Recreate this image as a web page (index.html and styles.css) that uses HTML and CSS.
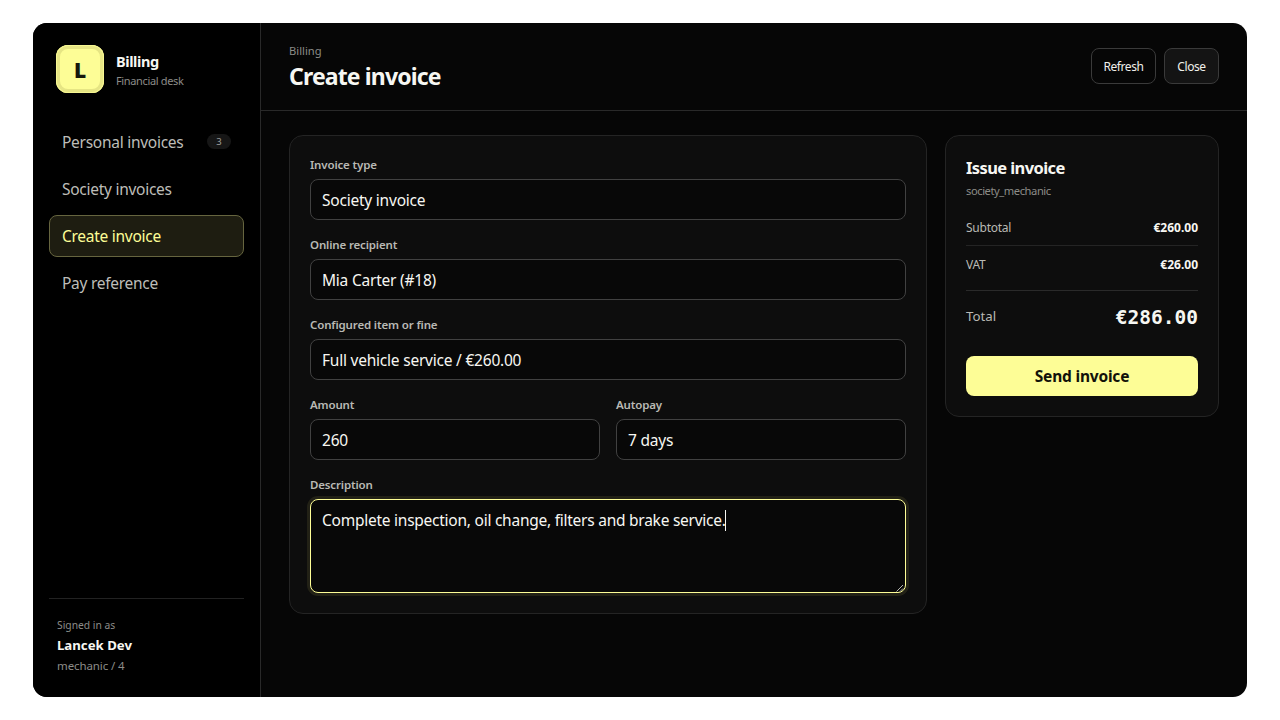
FILE: index.html
```html
<!DOCTYPE html>
<html lang="en">
<head>
    <meta charset="UTF-8">
    <meta name="viewport" content="width=device-width, initial-scale=1.0">
    <title>Billing</title>
    <link rel="stylesheet" href="styles.css">
</head>
<body>
    <div class="shell">
        <aside class="sidebar">
            <div class="brand">
                <div class="brand-mark">L</div>
                <div class="brand-text">
                    <div class="brand-name">Billing</div>
                    <div class="brand-sub">Financial desk</div>
                </div>
            </div>
            <nav class="nav">
                <a class="nav-item"><span>Personal invoices</span><span class="count">3</span></a>
                <a class="nav-item"><span>Society invoices</span></a>
                <a class="nav-item active"><span>Create invoice</span></a>
                <a class="nav-item"><span>Pay reference</span></a>
            </nav>
            <div class="user">
                <div class="user-label">Signed in as</div>
                <div class="user-name">Lancek Dev</div>
                <div class="user-job">mechanic / 4</div>
            </div>
        </aside>
        <main class="main">
            <header class="header">
                <div>
                    <div class="eyebrow">Billing</div>
                    <h1>Create invoice</h1>
                </div>
                <div class="actions">
                    <button class="btn refresh">Refresh</button>
                    <button class="btn close">Close</button>
                </div>
            </header>
            <div class="content">
                <section class="card form">
                    <div class="field">
                        <div class="label">Invoice type</div>
                        <div class="input">Society invoice</div>
                    </div>
                    <div class="field">
                        <div class="label">Online recipient</div>
                        <div class="input">Mia Carter (#18)</div>
                    </div>
                    <div class="field">
                        <div class="label">Configured item or fine</div>
                        <div class="input">Full vehicle service / €260.00</div>
                    </div>
                    <div class="row">
                        <div class="field">
                            <div class="label">Amount</div>
                            <div class="input">260</div>
                        </div>
                        <div class="field">
                            <div class="label">Autopay</div>
                            <div class="input">7 days</div>
                        </div>
                    </div>
                    <div class="field">
                        <div class="label">Description</div>
                        <div class="input textarea focused">
                            <span class="desc">Complete inspection, oil change, filters and brake service.</span><span class="caret"></span>
                            <svg class="grip" width="8" height="8" viewBox="0 0 8 8"><path d="M0.5 7.5L7 1M4 7.5L7 4.5" stroke="#b5b5b0" fill="none"/></svg>
                        </div>
                    </div>
                </section>
                <aside class="card summary">
                    <h2>Issue invoice</h2>
                    <div class="society">society_mechanic</div>
                    <div class="line"><span>Subtotal</span><strong>€260.00</strong></div>
                    <div class="line last"><span>VAT</span><strong>€26.00</strong></div>
                    <div class="total"><span>Total</span><strong>€286.00</strong></div>
                    <button class="send">Send invoice</button>
                </aside>
            </div>
        </main>
    </div>
</body>
</html>
```
FILE: styles.css
```css
* {
    box-sizing: border-box;
}

body {
    margin: 0;
    height: 720px;
    padding: 23px 33px;
    background: #ffffff;
    color: #f7f7f2;
    font-family: "Noto Sans", "Open Sans", sans-serif;
    overflow: hidden;
}

h1, h2 {
    margin: 0;
}

.shell {
    display: flex;
    width: 1214px;
    height: 674px;
    border-radius: 14px;
    overflow: hidden;
    background: #060606;
}

/* Sidebar */
.sidebar {
    width: 228px;
    padding: 22px 16px;
    background: #000000;
    border-right: 1px solid #292929;
    display: flex;
    flex-direction: column;
}

.brand {
    display: flex;
    align-items: center;
    gap: 12px;
    padding-left: 7px;
    margin-bottom: 28px;
}

.brand-mark {
    width: 48px;
    height: 48px;
    border-radius: 12px;
    background: #fdfd96;
    box-shadow: inset 0 0 0 1px #f6f692, inset 0 0 0 4px #e6e584;
    color: #17170c;
    font-size: 21px;
    font-weight: 900;
    line-height: 50px;
    text-align: center;
}

.brand-text {
    padding-top: 3px;
}

.brand-name {
    font-size: 14.5px;
    font-weight: 700;
    line-height: 20px;
    letter-spacing: -0.4px;
}

.brand-sub {
    color: #8c8c88;
    font-size: 11px;
    line-height: 20px;
    letter-spacing: -0.35px;
}

.nav {
    display: flex;
    flex-direction: column;
    gap: 5px;
}

.nav-item {
    height: 42px;
    padding: 0 12px;
    border: 1px solid transparent;
    border-radius: 8px;
    display: flex;
    align-items: center;
    justify-content: space-between;
    color: #bdbdb8;
    font-size: 15.5px;
    letter-spacing: -0.27px;
}

.nav-item.active {
    background: #1e1d11;
    border-color: #66653f;
    color: #fdfd96;
}

.count {
    width: 24px;
    height: 15px;
    margin-top: -1px;
    border-radius: 8px;
    background: #161616;
    color: #a0a09c;
    font-size: 9.5px;
    line-height: 15px;
    letter-spacing: 0;
    text-align: center;
}

.user {
    margin-top: auto;
    padding: 16px 8px 0;
    border-top: 1px solid #222222;
    color: #8c8c88;
    font-size: 11.5px;
    line-height: 20px;
}

.user-label {
    font-size: 10.3px;
}

.user-name {
    color: #f7f7f2;
    font-size: 13.2px;
    font-weight: 700;
}

.user-job {
    line-height: 21px;
    margin-bottom: -1px;
    letter-spacing: -0.1px;
}

/* Main area */
.main {
    flex: 1;
}

.header {
    height: 88px;
    padding: 0 28px;
    border-bottom: 1px solid #292929;
    display: flex;
    align-items: center;
    justify-content: space-between;
}

.eyebrow {
    color: #8c8c88;
    font-size: 11.2px;
    line-height: 18px;
}

h1 {
    font-size: 23px;
    line-height: 32px;
    letter-spacing: -0.85px;
}

.actions {
    display: flex;
    gap: 8px;
    margin-top: -2px;
}

.btn {
    height: 36px;
    padding: 1px 0 0;
    border: 1px solid #3a3a3a;
    border-radius: 8px;
    background: #060606;
    color: #f0f0eb;
    font-family: inherit;
    font-size: 12px;
    letter-spacing: -0.4px;
}

.refresh {
    width: 65px;
}

.close {
    width: 55px;
    background: #141414;
}

.content {
    padding: 24px 28px;
    display: grid;
    grid-template-columns: 638px 274px;
    gap: 18px;
    align-items: start;
}

.card {
    padding: 20px;
    border: 1px solid #242424;
    border-radius: 14px;
    background: #0d0d0d;
}

.form {
    display: flex;
    flex-direction: column;
    gap: 16px;
}

.row {
    display: grid;
    grid-template-columns: 1fr 1fr;
    gap: 16px;
}

.label {
    margin-bottom: 6px;
    color: #b9b9b4;
    font-size: 11.5px;
    font-weight: 600;
    line-height: 17px;
    letter-spacing: -0.15px;
}

.input {
    height: 41px;
    padding: 0 11px;
    border: 1px solid #414141;
    border-radius: 8px;
    background: #080808;
    font-size: 15.5px;
    line-height: 40px;
    letter-spacing: -0.22px;
    white-space: nowrap;
}

.textarea {
    position: relative;
    height: 94px;
    letter-spacing: -0.25px;
}

.focused {
    border-color: #fdfd96;
    box-shadow: 0 0 0 3px #222116;
}

.caret {
    display: inline-block;
    width: 1px;
    height: 21px;
    margin-left: -1px;
    vertical-align: -5px;
    background: #f7f7f2;
}

.grip {
    position: absolute;
    right: 1px;
    bottom: 0;
}

/* Summary */
h2 {
    font-size: 16.5px;
    line-height: 24px;
    letter-spacing: -0.6px;
}

.society {
    margin: 3px 0 10px;
    color: #8c8c88;
    font-size: 11.2px;
    line-height: 16px;
    letter-spacing: -0.45px;
}

.line {
    height: 37px;
    border-bottom: 1px solid #242424;
    display: flex;
    align-items: center;
    justify-content: space-between;
    color: #b9b9b4;
    font-size: 12px;
    letter-spacing: -0.25px;
}

.line strong {
    color: #f7f7f2;
    letter-spacing: 0;
}

.last {
    border-bottom-color: transparent;
}

.total {
    margin: 7px 0 26px;
    padding-top: 15px;
    border-top: 1px solid #2a2a2a;
    display: flex;
    justify-content: space-between;
    color: #b9b9b4;
    font-size: 13.3px;
    line-height: 20px;
}

.total strong {
    color: #f7f7f2;
    font-family: "DejaVu Sans Mono", monospace;
    font-size: 19.5px;
    line-height: 24px;
}

.send {
    width: 100%;
    height: 40px;
    border: 0;
    border-radius: 8px;
    background: #fdfd96;
    color: #12120a;
    font-family: inherit;
    font-size: 15.5px;
    font-weight: 700;
    letter-spacing: -0.2px;
}
```
